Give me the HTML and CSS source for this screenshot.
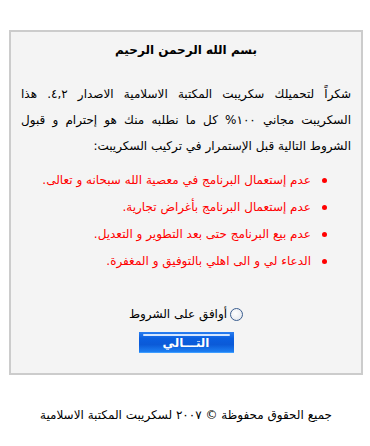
FILE: index.html
```html
<!DOCTYPE html>
<html lang="ar" dir="rtl">
<head>
<meta charset="utf-8">
<title>سكريبت المكتبة الاسلامية</title>
<link rel="stylesheet" href="styles.css">
</head>
<body>
<div class="page">
  <div class="box">
    <h1 class="title">بسم الله الرحمن الرحيم</h1>
    <p class="intro">شكراً لتحميلك سكريبت المكتبة الاسلامية الاصدار ٤,٢. هذا السكريبت مجاني ١٠٠% كل ما نطلبه منك هو إحترام و قبول الشروط التالية قبل الإستمرار في تركيب السكريبت:</p>
    <ul class="terms">
      <li>عدم إستعمال البرنامج في معصية الله سبحانه و تعالى.</li>
      <li>عدم إستعمال البرنامج بأغراض تجارية.</li>
      <li>عدم بيع البرنامج حتى بعد التطوير و التعديل.</li>
      <li>الدعاء لي و الى اهلي بالتوفيق و المغفرة.</li>
    </ul>
    <label class="agree"><span class="radio"></span>أوافق على الشروط</label>
    <div class="btn-row"><button class="next" type="button"><span class="dots dots-r"></span>التـــالي<span class="dots dots-l"></span></button></div>
  </div>
  <p class="footer">جميع الحقوق محفوظة © ٢٠٠٧ لسكريبت المكتبة الاسلامية</p>
</div>
</body>
</html>
```
FILE: styles.css
```css
html, body { margin: 0; padding: 0; background: #fff; }
body { font-family: "DejaVu Sans", sans-serif; font-size: 12px; color: #000; }
.page { padding: 30px 7px 0 9px; width: 354px; }
.box {
  border: 2px solid #cccccc;
  background: #f4f4f4;
  height: 341px;
  padding: 0 10px;
  display: flex;
  flex-direction: column;
}
.title { font-size: 12px; font-weight: bold; text-align: center; margin: 10px 0 0; line-height: 16px; }
.intro { margin: 23px 0 0; line-height: 26px; text-align: justify; text-align-last: right; }
.terms { color: #ff0000; margin: 8px 0 0; padding: 0 40px 0 0; line-height: 27px; list-style: none; }
.terms li { position: relative; }
.terms li::before {
  content: ""; position: absolute; right: -16px; top: 11px;
  width: 5px; height: 5px; border-radius: 50%; background: #ff0000;
}
.agree { display: flex; justify-content: center; align-items: center; gap: 2px; margin-top: 31px; line-height: 16px; }
.radio {
  width: 11px; height: 11px; border-radius: 50%; border: 1px solid #3a5d8f;
  background: radial-gradient(circle at 40% 40%, #ffffff, #dfe3ea);
  margin-left: 1px;
}
.btn-row { display: flex; justify-content: center; margin-top: 10px; }
.next {
  position: relative;
  width: 95px; height: 21px; border: 0; padding: 0;
  font-family: "DejaVu Sans", sans-serif; font-size: 12px; font-weight: bold; color: #fff;
  background: linear-gradient(#2a7ef0 0, #0a5fe0 30%, #0b5ad8 60%, #1f84f6 100%);
  box-shadow: inset 0 -1px 0 #3c9cff;
}
.next::before {
  content: ""; position: absolute; left: 4px; right: 4px; top: 2px; height: 2px;
  background: #d4e6ff; border-radius: 1px;
}
.dots {
  position: absolute; bottom: 4px; width: 3px; height: 3px;
  background:
    radial-gradient(circle, #8fc0ff 45%, transparent 50%) 0 0 / 2px 2px;
  opacity: .9;
}
.dots-l { left: 4px; }
.dots-r { right: 4px; }
.footer { text-align: center; margin: 32px 0 0; line-height: 16px; }
```
